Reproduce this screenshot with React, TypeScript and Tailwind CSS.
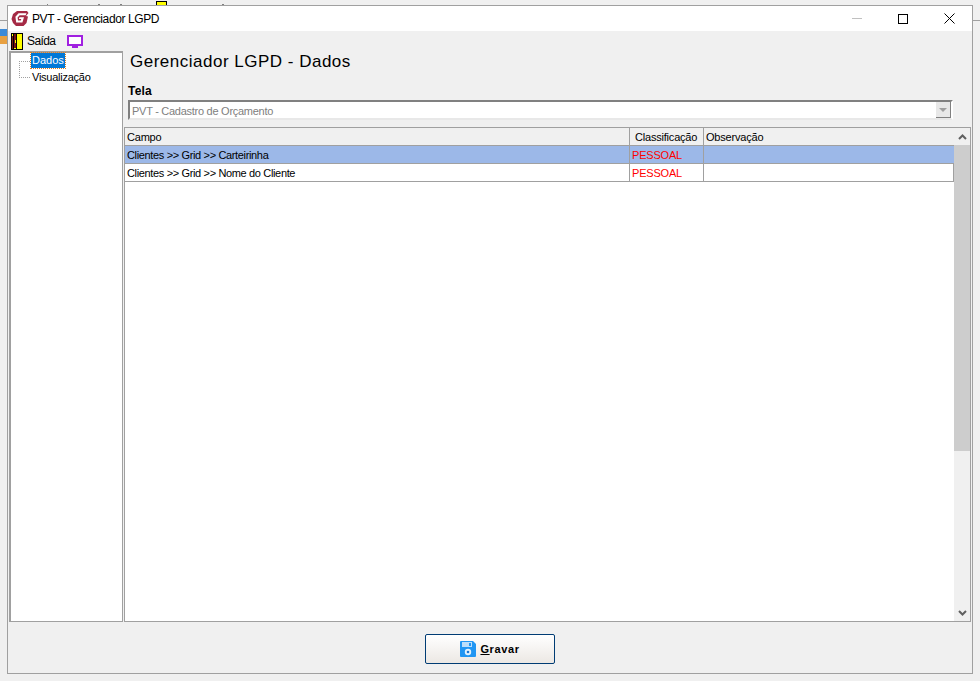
import React from "react";

const ui = "font-['Liberation_Sans',Arial,sans-serif]";

function Logo() {
  return (
    <svg width="18" height="17" viewBox="0 0 18 17">
      <path d="M6 1h10l1.5 2-2.5 3 2 .5-1.5 6.5-3 3H5l-3-3L.5 9 2 4z" fill="#a52a45" />
      <path d="M15.5 3.2H7.6L4.4 6.8 5.2 12.6h6.2l1.6-5.4H8.4l-.5 1.7h2.4l-.5 1.7H7L6.6 7.6 8.6 5.2h6z" fill="#fff" />
    </svg>
  );
}

function Door() {
  return (
    <svg width="12" height="17" viewBox="0 0 12 17" shapeRendering="crispEdges">
      <rect x="0" y="0" width="12" height="17" fill="#000" />
      <rect x="1" y="1" width="10" height="15" fill="#ffff00" />
      <path d="M1 3h1v-2h3v1h1v13h-3v1H1z" fill="#7a1414" />
      <rect x="2" y="1" width="1" height="15" fill="#000" />
      <rect x="5" y="1" width="1" height="15" fill="#000" />
      <rect x="4" y="7" width="1" height="3" fill="#ffff00" />
    </svg>
  );
}

function Monitor() {
  return (
    <svg width="16" height="13" viewBox="0 0 16 13" shapeRendering="crispEdges">
      <rect x="1" y="1" width="14" height="9" fill="#fff" stroke="#a020e0" strokeWidth="2" />
      <rect x="5" y="11" width="6" height="2" fill="#a020e0" />
    </svg>
  );
}

function Disk() {
  return (
    <svg width="16" height="16" viewBox="0 0 16 16">
      <path d="M1 0h12l3 3v12a1 1 0 0 1-1 1H1a1 1 0 0 1-1-1V1a1 1 0 0 1 1-1z" fill="#2196f3" />
      <rect x="2" y="1" width="10" height="5" fill="#bbdefb" />
      <rect x="9" y="2" width="2" height="3" fill="#2196f3" />
      <circle cx="8" cy="11" r="3.2" fill="#e3f2fd" />
      <circle cx="8" cy="11" r="1.3" fill="#1976d2" />
    </svg>
  );
}

function Row({ campo, selected }: { campo: string; selected?: boolean }) {
  return (
    <div className={`flex h-[18px] border-b border-[#a0a0a0] ${selected ? "bg-[#9cb8e8]" : "bg-white"}`}>
      <div className="w-[505px] pl-[2px] text-[11px] leading-[18px] tracking-[-0.35px] text-black border-r border-[#a0a0a0]">{campo}</div>
      <div className="w-[74px] pl-[2px] text-[11px] leading-[18px] tracking-[-0.2px] text-[#ff0000] border-r border-[#a0a0a0]">PESSOAL</div>
      <div className="flex-1" />
    </div>
  );
}

export default function App() {
  return (
    <div className={`relative w-[980px] h-[681px] overflow-hidden bg-[#f0f0f0] pl-[7px] pt-[5px] ${ui}`}>
      {/* what lies behind the window */}
      <div className="absolute left-[156px] top-[1px] w-[11px] h-[4px] bg-[#ffff00] border-x border-t border-black" />
      <div className="absolute left-[47px] top-[4px] w-px h-px bg-[#808080]" />
      <div className="absolute left-[98px] top-[4px] w-[2px] h-px bg-[#808080]" />
      <div className="absolute left-[120px] top-[4px] w-[2px] h-px bg-[#808080]" />
      <div className="absolute left-[222px] top-[4px] w-[2px] h-px bg-[#808080]" />
      <div className="absolute left-0 top-[20px] w-[7px] h-px bg-[#a0a0a0]" />
      <div className="absolute right-0 top-[20px] w-[7px] h-px bg-[#a0a0a0]" />
      <div className="absolute left-0 top-[29px] w-[7px] h-[7px] bg-[#3a8ad8]" />
      <div className="absolute left-0 top-[36px] w-[7px] h-[8px] bg-[#e8a040]" />

      <div className="relative flex flex-col w-[966px] h-[669px] border border-[#a0a0a0] bg-[#f0f0f0]">
        {/* title bar */}
        <div className="flex items-center h-[25px] bg-white">
          <div className="ml-[3px] mr-[3px] flex"><Logo /></div>
          <span className="text-[12px] tracking-[-0.4px] text-black">PVT - Gerenciador LGPD</span>
          <div className="ml-auto flex items-center">
            <div className="w-[46px] flex justify-center"><div className="w-[10px] h-px bg-[#c0c0c0]" /></div>
            <div className="w-[46px] flex justify-center"><div className="w-[10px] h-[10px] border border-black" /></div>
            <div className="w-[46px] flex justify-center">
              <svg width="11" height="11" viewBox="0 0 11 11"><path d="M.5.5l10 10M10.5.5l-10 10" stroke="#000" strokeWidth="1" /></svg>
            </div>
          </div>
        </div>

        {/* toolbar */}
        <div className="flex items-center h-[20px] pl-[3px]">
          <Door />
          <span className="ml-[4px] w-[28px] text-[12px] tracking-[-0.6px] text-black">Saída</span>
          <div className="ml-[12px] flex"><Monitor /></div>
        </div>

        {/* body */}
        <div className="flex h-[571px] pl-[1px] gap-[1px]">
          <div className="relative w-[114px] bg-white border border-[#a0a0a0] border-l-2 border-t-2">
            <div className="absolute left-[8px] top-[8px] w-[11px] h-[17px] border-l border-b border-dotted border-[#a0a0a0]" />
            <div className="absolute left-[8px] top-[8px] w-[11px] h-px border-t border-dotted border-[#a0a0a0]" />
            <div className="absolute left-[20px] top-0 h-[15px] px-[1px] bg-[#0078d7] text-white text-[11px] leading-[15px] outline-1 outline-dotted outline-[#e08020]">Dados</div>
            <div className="absolute left-[21px] top-[17px] text-[11px] leading-[15px] tracking-[-0.25px] text-black">Visualização</div>
          </div>

          <div className="flex-1 flex flex-col min-w-0">
            <div className="pl-[6px] h-[22px] flex items-center text-[17px] tracking-[0.5px] text-black">Gerenciador LGPD - Dados</div>
            <div className="mt-[10px] pl-[4px] h-[17px] text-[12px] leading-[17px] tracking-[0.2px] font-bold text-black">Tela</div>
            <div className="ml-[4px] mr-[19px] h-[20px] flex items-center bg-white border-2 border-[#808080] border-r-white border-b-[#e8e8e8]">
              <span className="pl-[2px] text-[11px] leading-[18px] pt-[1px] tracking-[-0.27px] text-[#808080]">PVT - Cadastro de Orçamento</span>
              <div className="ml-auto w-[15px] h-[16px] bg-[#e8e8e8] border-r border-b border-[#808080] flex items-center justify-center">
                <div className="w-0 h-0 border-x-[4px] border-x-transparent border-t-[4px] border-t-[#a0a0a0]" />
              </div>
            </div>
            <div className="mt-[7px] mr-[1px] flex-1 flex bg-white border border-[#a0a0a0] min-h-0">
              <div className="flex-1 flex flex-col min-w-0">
                <div className="flex h-[18px] bg-[#f0f0f0] border-b border-[#a0a0a0] text-[11px] leading-[18px] tracking-[-0.2px] text-black">
                  <div className="w-[505px] pl-[2px] border-r border-[#a0a0a0]">Campo</div>
                  <div className="w-[74px] pl-[5px] border-r border-[#a0a0a0]">Classificação</div>
                  <div className="flex-1 pl-[2px]">Observação</div>
                </div>
                <Row campo="Clientes >> Grid >> Carteirinha" selected />
                <div className="border-r border-[#a0a0a0]"><Row campo="Clientes >> Grid >> Nome do Cliente" /></div>
              </div>
              <div className="w-[16px] flex flex-col bg-[#f0f0f0]">
                <div className="h-[17px] flex items-center justify-center">
                  <svg width="9" height="6" viewBox="0 0 9 6"><path d="M1 5l3.5-3.5L8 5" fill="none" stroke="#606060" strokeWidth="2" /></svg>
                </div>
                <div className="h-[306px] bg-[#cdcdcd]" />
                <div className="mt-auto h-[17px] flex items-center justify-center">
                  <svg width="9" height="6" viewBox="0 0 9 6"><path d="M1 1l3.5 3.5L8 1" fill="none" stroke="#606060" strokeWidth="2" /></svg>
                </div>
              </div>
            </div>
          </div>
        </div>

        {/* footer */}
        <div className="flex-1 flex items-center justify-center pt-[3px]">
          <button className="w-[130px] h-[30px] flex items-center justify-center gap-[4px] rounded-[2px] border border-[#003c74] bg-gradient-to-b from-white to-[#ece8e4] text-[11px] font-bold tracking-[0.6px] text-black">
            <Disk />
            <span><span className="underline">G</span>ravar</span>
          </button>
        </div>
      </div>
    </div>
  );
}
